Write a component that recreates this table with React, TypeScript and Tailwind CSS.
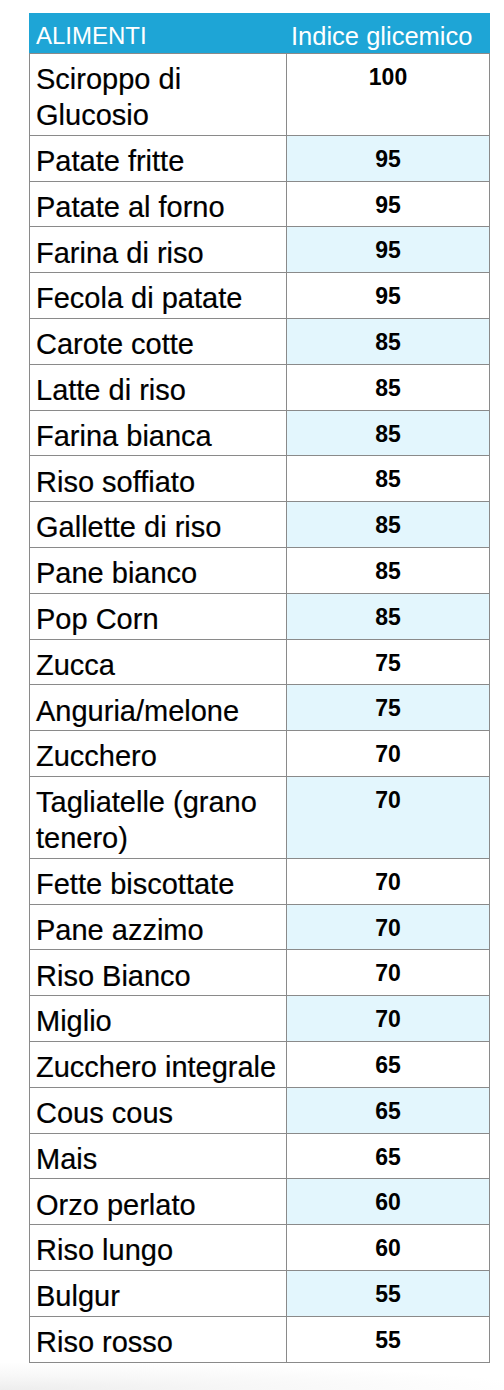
import React from "react";

type Row = { name: string[]; gi: string };

const rows: Row[] = [
  { name: ["Sciroppo di", "Glucosio"], gi: "100" },
  { name: ["Patate fritte"], gi: "95" },
  { name: ["Patate al forno"], gi: "95" },
  { name: ["Farina di riso"], gi: "95" },
  { name: ["Fecola di patate"], gi: "95" },
  { name: ["Carote cotte"], gi: "85" },
  { name: ["Latte di riso"], gi: "85" },
  { name: ["Farina bianca"], gi: "85" },
  { name: ["Riso soffiato"], gi: "85" },
  { name: ["Gallette di riso"], gi: "85" },
  { name: ["Pane bianco"], gi: "85" },
  { name: ["Pop Corn"], gi: "85" },
  { name: ["Zucca"], gi: "75" },
  { name: ["Anguria/melone"], gi: "75" },
  { name: ["Zucchero"], gi: "70" },
  { name: ["Tagliatelle (grano", "tenero)"], gi: "70" },
  { name: ["Fette biscottate"], gi: "70" },
  { name: ["Pane azzimo"], gi: "70" },
  { name: ["Riso Bianco"], gi: "70" },
  { name: ["Miglio"], gi: "70" },
  { name: ["Zucchero integrale"], gi: "65" },
  { name: ["Cous cous"], gi: "65" },
  { name: ["Mais"], gi: "65" },
  { name: ["Orzo perlato"], gi: "60" },
  { name: ["Riso lungo"], gi: "60" },
  { name: ["Bulgur"], gi: "55" },
  { name: ["Riso rosso"], gi: "55" },
];

export default function App() {
  return (
    <div
      className="w-[504px] h-[1390px] bg-white flex flex-col"
      style={{ fontFamily: '"Liberation Sans", Arial, Helvetica, sans-serif' }}
    >
      <div className="pt-[13px] pl-[29px]">
        <div className="w-[461px]">
          <div className="flex h-[41px] bg-[#1ea5d6] border-b border-[#8a8a8a] text-white">
            <div className="w-[258px] pl-[7px] pt-[4.5px] text-[24px] leading-[36px] whitespace-nowrap">
              ALIMENTI
            </div>
            <div className="flex-1 pl-[4px] pt-[4.5px] text-[25.5px] leading-[36px] whitespace-nowrap">
              Indice glicemico
            </div>
          </div>
          {rows.map((r, i) => (
            <div
              key={i}
              className="flex border-l border-r border-b border-[#8a8a8a]"
            >
              <div className="w-[257px] border-r border-[#8a8a8a] pl-[6px] pt-[7.3px] pb-[1.5px] text-[29px] leading-[36px] text-black whitespace-nowrap [-webkit-text-stroke:0.2px_#000]">
                {r.name.map((l, j) => (
                  <div key={j}>{l}</div>
                ))}
              </div>
              <div
                className={
                  i % 2 === 1
                    ? "flex-1 bg-[#e3f6fd] text-center pt-[5px] text-[23px] font-bold leading-[36px] text-black"
                    : "flex-1 bg-white text-center pt-[5px] text-[23px] font-bold leading-[36px] text-black"
                }
              >
                {r.gi}
              </div>
            </div>
          ))}
        </div>
      </div>
      <div className="flex-1 bg-[radial-gradient(ellipse_at_bottom_left,#ededed_0%,#f7f7f7_35%,#ffffff_75%)]" />
    </div>
  );
}
